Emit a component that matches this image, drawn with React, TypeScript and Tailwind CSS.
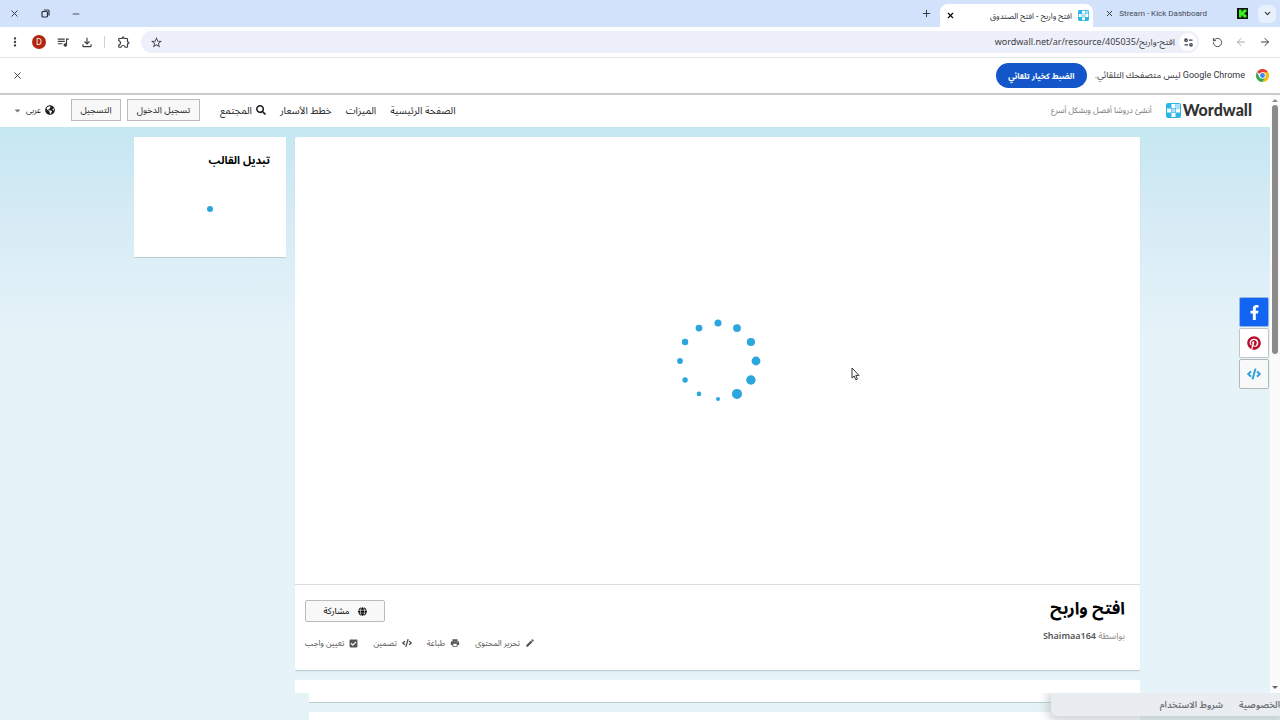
import type { ReactNode } from "react"
import { clsx } from "clsx"
import { ArrowLeft, ArrowRight, ChevronDown, Minus, Plus, RotateCcw, X } from "lucide-react"
import { FaCaretDown, FaCheckSquare, FaCode, FaFacebookF, FaGlobe, FaGlobeAmericas, FaPinterest, FaSearch } from "react-icons/fa"
import { MdEdit, MdMoreVert, MdOutlineExtension, MdOutlineFileDownload, MdPrint, MdQueueMusic, MdStarBorder } from "react-icons/md"

const NAV_LINKS = ["الصفحة الرئيسية", "الميزات", "خطط الأسعار"]

const ACTIONS = [
  { label: "تحرير المحتوى", icon: <MdEdit size={10} /> },
  { label: "طباعة", icon: <MdPrint size={10} /> },
  { label: "تضمين", icon: <FaCode size={10} /> },
  { label: "تعيين واجب", icon: <FaCheckSquare size={9} /> },
]

// clockwise from twelve o'clock
const DOTS = [3.5, 3.9, 4.1, 4.4, 4.7, 5, 2, 2.3, 2.7, 2.9, 3.2, 3.4]

function GridLogo({ size }: { size: number }) {
  return (
    <svg width={size} height={size} viewBox="0 0 15 15" className="shrink-0">
      <rect width="15" height="15" rx="2" fill="#2cb5e8" />
      <path d="M5.5 1h4v4h-4zM1 5.5h4v4H1zM10 5.5h4v4h-4zM5.5 10h4v4h-4z" fill="#fff" />
      <path d="M10 1h4v4h-4zM5.5 5.5h4v4h-4z" fill="#a8e2f6" />
    </svg>
  )
}

function ChromeLogo() {
  return (
    <svg width="13" height="13" viewBox="0 0 48 48" className="shrink-0">
      <path d="M24 24 3.2 12A24 24 0 0 1 44.8 12z" fill="#ea4335" />
      <path d="M24 12h20.8A24 24 0 0 1 24 48l10.400-18z" fill="#fbbc04" />
      <path d="M3.2 12l10.400 18H24l10.400 0L24 48A24 24 0 0 1 3.2 12z" fill="#34a853" />
      <circle cx="24" cy="24" r="12" fill="#fff" />
      <circle cx="24" cy="24" r="9" fill="#4285f4" />
    </svg>
  )
}

function Spinner() {
  return (
    <svg width="90" height="90" viewBox="-45 -45 90 90" role="img" aria-label="جار التحميل">
      {DOTS.map((r, i) => {
        const a = (i * Math.PI) / 6
        return <circle key={i} cx={38 * Math.sin(a)} cy={-38 * Math.cos(a)} r={r} fill="#2ba6de" />
      })}
    </svg>
  )
}

function IconButton({ label, className, children }: { label: string; className?: string; children: ReactNode }) {
  return (
    <button aria-label={label} className={clsx("flex shrink-0 items-center justify-center", className)}>
      {children}
    </button>
  )
}

function TabStrip() {
  return (
    <div className="flex h-[27px] items-center bg-[#d3e2fb] pr-1 pl-2 text-[#2b3038]">
      <IconButton label="البحث في علامات التبويب" className="h-[18px] w-[18px] rounded-md bg-[#e9f0fd]">
        <ChevronDown size={9} strokeWidth={3} />
      </IconButton>
      <div className="mr-[10px] flex w-[145px] items-center">
        <svg width="11" height="11" viewBox="0 0 11 11" className="shrink-0">
          <rect width="11" height="11" fill="#111" />
          <path d="M2 1.500h2.500v2h1v-1h1v-1H9.500v2.500h-1v1h-1v1h1v1h1v2.500H6.500v-1h-1v-1h-1v2H2z" fill="#35f01c" />
        </svg>
        <span dir="ltr" className="mr-[30px] font-['Roboto','Noto_Sans',sans-serif] text-[8px] whitespace-nowrap text-[#444a55]">
          Stream - Kick Dashboard
        </span>
        <IconButton label="إغلاق Kick" className="mr-auto w-3">
          <X size={9} strokeWidth={2.500} />
        </IconButton>
      </div>
      <div className="mr-[10px] flex h-[23px] w-[153px] items-center gap-[6px] self-end rounded-t-lg bg-white px-1">
        <GridLogo size={11} />
        <span className="flex-1 text-[8px] whitespace-nowrap">افتح واربح - افتح الصندوق</span>
        <IconButton label="إغلاق" className="w-3 text-black">
          <X size={9} strokeWidth={3} />
        </IconButton>
      </div>
      <IconButton label="علامة تبويب جديدة" className="mr-2 w-3">
        <Plus size={11} />
      </IconButton>
      <div className="mr-auto flex items-center gap-[19px]">
        <IconButton label="تصغير" className="w-3">
          <Minus size={10} />
        </IconButton>
        <IconButton label="استعادة" className="w-3">
          <svg width="9" height="9" viewBox="0 0 9 9" fill="none" stroke="currentColor" strokeWidth="1.200">
            <rect x="1" y="2.500" width="5.500" height="5.500" rx="1" />
            <path d="M2.800 1h4.200a1 1 0 0 1 1 1v4.500" />
          </svg>
        </IconButton>
        <IconButton label="إغلاق النافذة" className="w-3">
          <X size={11} />
        </IconButton>
      </div>
    </div>
  )
}

function Toolbar() {
  return (
    <div className="flex h-[31px] items-center border-b border-[#dfe5e3] bg-white px-2 text-[#3c4043]">
      <IconButton label="رجوع" className="w-[14px]">
        <ArrowRight size={12} />
      </IconButton>
      <IconButton label="إلى الأمام" className="mr-[10px] w-[14px] text-[#a8abaf]">
        <ArrowLeft size={12} />
      </IconButton>
      <IconButton label="إعادة التحميل" className="mr-[10px] w-[14px]">
        <RotateCcw size={11} />
      </IconButton>
      <div className="mr-[11px] flex h-[22px] flex-1 items-center rounded-full bg-[#edf0fa] pr-[2px] pl-2">
        <IconButton label="معلومات الموقع" className="h-[18px] w-[18px] rounded-full bg-white">
          <svg width="9" height="9" viewBox="0 0 9 9" fill="none" stroke="currentColor" strokeWidth="1.300">
            <circle cx="2" cy="2.200" r="1.200" />
            <path d="M5 2.200h3.500M.5 6.800H4" />
            <circle cx="7" cy="6.800" r="1.200" />
          </svg>
        </IconButton>
        <input
          dir="ltr"
          aria-label="عنوان الموقع"
          defaultValue="wordwall.net/ar/resource/405035/افتح-واربح"
          className="mr-1 min-w-0 flex-1 bg-transparent text-right text-[9px] outline-none"
        />
        <IconButton label="وضع إشارة" className="w-[14px]">
          <MdStarBorder size={13} />
        </IconButton>
      </div>
      <IconButton label="الإضافات" className="mr-[10px] w-[14px]">
        <MdOutlineExtension size={14} />
      </IconButton>
      <span className="mr-3 h-3 w-px bg-[#ccd3e0]" />
      <IconButton label="التنزيلات" className="mr-[10px] w-[14px]">
        <MdOutlineFileDownload size={15} />
      </IconButton>
      <IconButton label="الوسائط" className="mr-[10px] w-[14px]">
        <MdQueueMusic size={14} />
      </IconButton>
      <IconButton label="الملف الشخصي" className="mr-[10px] h-[14px] w-[14px] rounded-full bg-[#b3260e] text-[8px] text-white">
        D
      </IconButton>
      <IconButton label="القائمة" className="mr-[10px] w-[14px]">
        <MdMoreVert size={14} />
      </IconButton>
    </div>
  )
}

function DefaultBrowserBar() {
  return (
    <div className="flex h-[37px] items-center border-b-2 border-[#cbcbcb] bg-white pr-[11px] pl-3 text-[#33363a]">
      <ChromeLogo />
      <span className="mr-[11px] font-['Roboto','Noto_Sans','Noto_Sans_Arabic',sans-serif] text-[9px] whitespace-nowrap">Google Chrome ليس متصفحك التلقائي.</span>
      <button className="mr-2 h-[25px] w-[91px] rounded-full bg-[#1256c9] text-[8px] font-bold whitespace-nowrap text-white">
        الضبط كخيار تلقائي
      </button>
      <IconButton label="إغلاق الإشعار" className="mr-auto w-[11px]">
        <X size={11} />
      </IconButton>
    </div>
  )
}

function SiteHeader() {
  return (
    <header className="flex h-8 shrink-0 items-center bg-white pr-[18px] pb-[2px] pl-[13px] text-[#1f1f1f]">
      <a href="#" dir="ltr" className="flex items-center gap-[2px]">
        <GridLogo size={15} />
        <span className="font-['Lato'] text-[16px] leading-5 font-black text-[#333]">Wordwall</span>
      </a>
      <span className="mr-[14px] text-[8px] whitespace-nowrap text-[#777]">أنشئ دروسًا أفضل وبشكل أسرع</span>
      <nav className="mr-auto flex items-center gap-[14px] text-[10px] whitespace-nowrap">
        {NAV_LINKS.map((l) => (
          <a key={l} href="#">{l}</a>
        ))}
        <a href="#" className="flex items-center gap-1">
          <FaSearch size={10} />
          المجتمع
        </a>
      </nav>
      <button className="mr-5 h-[22px] w-[73px] border border-[#bbb] bg-[#f8f8f8] text-[9px] whitespace-nowrap">تسجيل الدخول</button>
      <button className="mr-[6px] h-[22px] w-[50px] border border-[#bbb] bg-[#f8f8f8] text-[9px]">التسجيل</button>
      <button className="mr-4 flex items-center gap-1 text-[8px]">
        <FaGlobeAmericas size={10} />
        عربى
        <FaCaretDown size={9} className="text-[#777]" />
      </button>
    </header>
  )
}

function Activity() {
  return (
    <section className="rounded-xs border-b border-[#b9cdd0] bg-white shadow-xs">
      <div className="flex h-[447px] items-center justify-center">
        <Spinner />
      </div>
      <div className="flex h-[86px] justify-between border-t border-[#ddd] px-[10px]">
        <div className="pt-2 pr-[5px]">
          <h1 className="text-[17px] leading-[30px] font-bold text-black">افتح واربح</h1>
          <p className="mt-[6px] text-[9px] text-[#888]">
            بواسطة <a href="#" className="font-semibold text-[#555]">Shaimaa164</a>
          </p>
        </div>
        <div className="flex flex-col items-end pt-[15px]">
          <button className="flex h-[22px] w-20 items-center justify-center gap-2 rounded-xs border border-[#bbb] bg-[#f8f8f8] text-[9px]">
            <FaGlobe size={9} />
            مشاركة
          </button>
          <div className="mt-[15px] flex gap-[15px] text-[8px] whitespace-nowrap text-[#555]">
            {ACTIONS.map((a) => (
              <button key={a.label} className="flex items-center gap-[5px]">
                {a.icon}
                {a.label}
              </button>
            ))}
          </div>
        </div>
      </div>
    </section>
  )
}

function ShareRail() {
  return (
    <div className="absolute top-[170px] right-px flex flex-col gap-px">
      <IconButton label="Facebook" className="h-[30px] w-[30px] rounded-xs border border-[#9bb4dd] bg-[#1265f0] text-white">
        <FaFacebookF size={15} />
      </IconButton>
      <IconButton label="Pinterest" className="h-[30px] w-[30px] rounded-xs border border-[#c4c4c4] bg-white text-[#b7102c]">
        <FaPinterest size={14} />
      </IconButton>
      <IconButton label="تضمين" className="h-[30px] w-[30px] rounded-xs border border-[#b4b8ba] bg-[#f8f9f9] text-[#2b9fdc]">
        <FaCode size={14} />
      </IconButton>
    </div>
  )
}

function Scrollbar() {
  return (
    <div className="flex w-[10px] shrink-0 flex-col items-center justify-between bg-[#fbfbfb] py-1">
      <div className="flex flex-col items-center gap-[3px]">
        <span className="border-x-3 border-b-3 border-x-transparent border-b-[#888]" />
        <span className="h-[249px] w-[6px] rounded-full bg-[#8b8b8b]" />
      </div>
      <span className="border-x-3 border-t-3 border-x-transparent border-t-[#666]" />
    </div>
  )
}

function FooterStrip() {
  return (
    <footer className="relative h-[27px] shrink-0 overflow-hidden bg-[#e6f3f6]">
      <div className="mr-[140px] ml-[309px] flex flex-col gap-[9px]">
        <div className="h-[10px] border-b border-[#b9cdd0] bg-white" />
        <div className="h-2 bg-white" />
      </div>
      <nav className="absolute top-0 right-0 flex h-[23px] w-[229px] items-center gap-4 rounded-bl-md bg-[#e9edf1] text-[9px] font-semibold whitespace-nowrap text-[#6c7074] shadow-[0_2px_8px_4px_#a9b2b580]">
        <a href="#">الخصوصية</a>
        <a href="#">شروط الاستخدام</a>
      </nav>
    </footer>
  )
}

export default function App() {
  return (
    <div dir="rtl" className="flex h-screen flex-col overflow-hidden bg-white font-['Noto_Sans','Noto_Sans_Arabic','DejaVu_Sans',sans-serif]">
      <TabStrip />
      <Toolbar />
      <DefaultBrowserBar />
      <div className="flex min-h-0 flex-1">
        <Scrollbar />
        <div className="flex min-w-0 flex-1 flex-col">
          <SiteHeader />
          <main className="relative min-h-0 flex-1 overflow-hidden bg-[#e6f3f9] bg-[linear-gradient(#c5e7f1,#d6ebf5_90px,#e6f3f9_210px)] pt-[10px] pr-[130px] pl-[134px]">
            <div className="flex items-start gap-[9px]">
              <div className="min-w-0 flex-1">
                <Activity />
                <div className="mt-[9px] h-10 bg-white" />
              </div>
              <aside className="h-[121px] w-[152px] border-b border-[#b9cdd0] bg-white px-4 pt-[13px]">
                <h2 className="text-[11px] leading-5 font-bold text-black">تبديل القالب</h2>
                <span className="mx-auto mt-9 block h-[6px] w-[6px] rounded-full bg-[#2ba6de]" />
              </aside>
            </div>
            <ShareRail />
          </main>
        </div>
      </div>
      <FooterStrip />
      <svg width="9" height="14" viewBox="0 0 9 14" className="pointer-events-none fixed top-[367px] left-[851px]">
        <path d="M1 1v10l2.200-2 1.600 3.800 1.600-.7L4.800 8.400H8z" fill="#fff" stroke="#333" />
      </svg>
    </div>
  )
}
